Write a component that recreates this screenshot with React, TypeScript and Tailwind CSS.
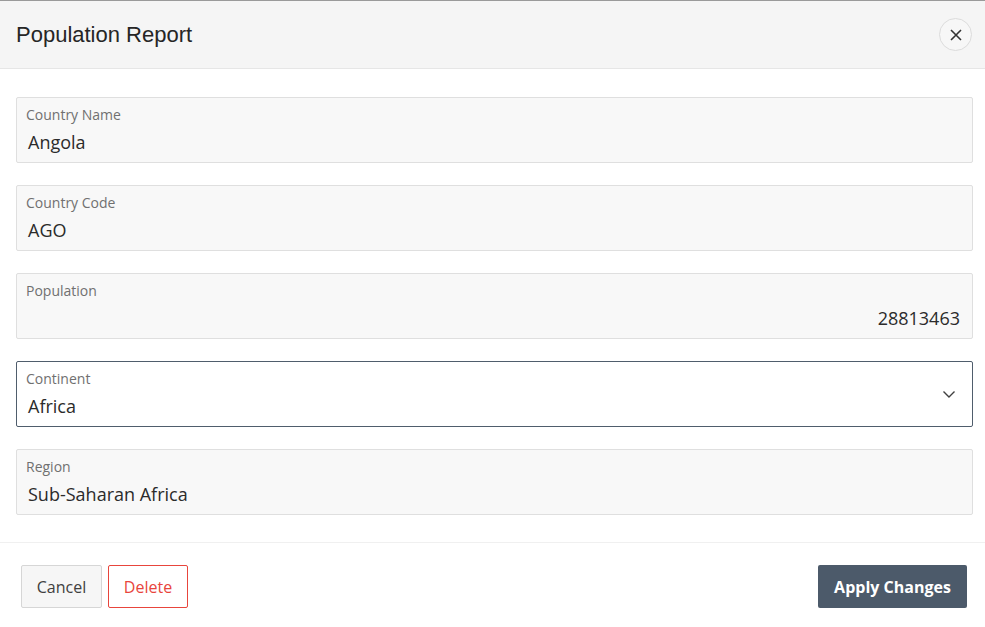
import React, { FC } from 'react';

type FieldProps = {
  label: string;
  value: string;
  alignRight?: boolean;
};

const Field: FC<FieldProps> = ({ label, value, alignRight }) => {
  return (
    <div className="h-[66px] rounded-[2px] border border-[#dfdfdf] bg-[#f8f8f8] pl-[9px] pr-[12px] pt-[7px]">
      <div className="text-[14px] leading-[20px] text-[#707070]">{label}</div>
      <div
        className={
          "mt-[4px] pl-[2px] text-[18px] leading-[26px] text-[#2b2b2b]" +
          (alignRight ? " text-right" : "")
        }
      >
        {value}
      </div>
    </div>
  );
};

const SelectField: FC<FieldProps> = ({ label, value }) => {
  return (
    <div className="relative h-[66px] rounded-[2px] border border-[#4f5d6c] bg-white pl-[9px] pr-[12px] pt-[7px]">
      <div className="text-[14px] leading-[20px] text-[#707070]">{label}</div>
      <div className="mt-[4px] pl-[2px] text-[18px] leading-[26px] text-[#2b2b2b]">{value}</div>
      <svg
        className="absolute right-[16px] top-[27px]"
        width="14"
        height="10"
        viewBox="0 0 14 10"
        fill="none"
        stroke="#404040"
        strokeWidth="1.4"
      >
        <path d="M1.5 2.5 L7 8 L12.5 2.5" />
      </svg>
    </div>
  );
};

const App: FC = () => {
  return (
    <div
      className="h-[627px] w-full overflow-hidden border-t border-[#9a9a9a] bg-white flex flex-col"
      style={{ fontFamily: '"Open Sans", "Noto Sans", sans-serif' }}
    >
      <div className="h-[68px] shrink-0 bg-[#f5f5f5] border-b border-[#e6e6e6] flex items-center justify-between pl-4 pr-[13px]">
        <h1
          className="text-[22px] text-[#262626]"
          style={{ fontFamily: '"Liberation Sans", Arial, sans-serif' }}
        >
          Population Report
        </h1>
        <button className="h-[33px] w-[33px] rounded-full border border-[#dcdcdc] bg-[#f7f7f7] flex items-center justify-center">
          <svg width="12" height="12" viewBox="0 0 12 12" stroke="#333" strokeWidth="1.6" fill="none">
            <path d="M1 1 L11 11 M11 1 L1 11" />
          </svg>
        </button>
      </div>

      <div className="pl-4 pr-3 pt-[28px] pb-[27px] flex flex-col gap-[22px]">
        <Field label="Country Name" value="Angola" />
        <Field label="Country Code" value="AGO" />
        <Field label="Population" value="28813463" alignRight />
        <SelectField label="Continent" value="Africa" />
        <Field label="Region" value="Sub-Saharan Africa" />
      </div>

      <div className="border-t border-[#f0f0f0] pt-[22px] pl-[21px] pr-[18px] flex items-start justify-between">
        <div className="flex gap-[6px]">
          <button className="h-[43px] w-[81px] rounded-[2px] border border-[#d6d6d6] bg-[#f6f6f6] text-[16px] text-[#404040]">
            Cancel
          </button>
          <button className="h-[43px] w-[80px] rounded-[2px] border border-[#e8453c] bg-white text-[16px] text-[#e8453c]">
            Delete
          </button>
        </div>
        <button className="h-[43px] w-[149px] rounded-[2px] bg-[#4c5a6a] text-[16px] font-bold text-white">
          Apply Changes
        </button>
      </div>
    </div>
  );
};

export default App;
